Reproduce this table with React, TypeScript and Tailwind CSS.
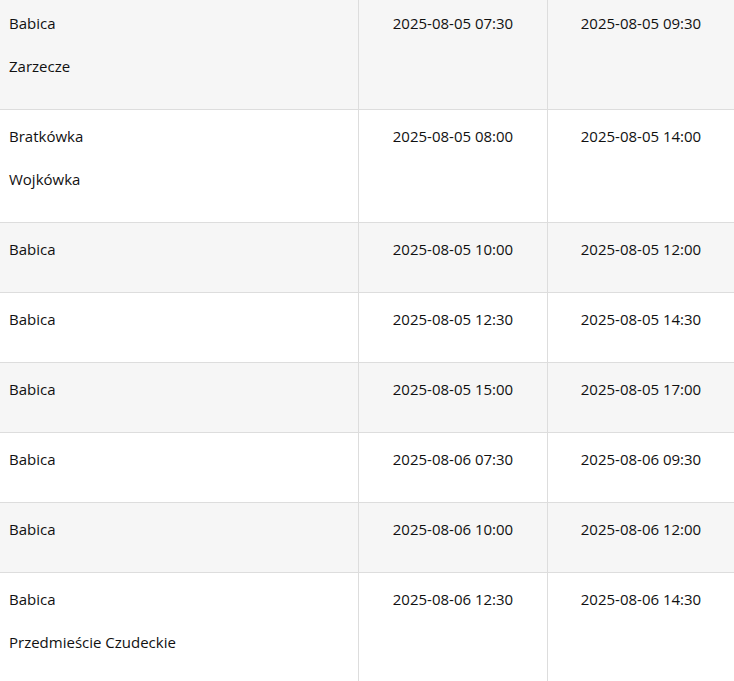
import React from 'react';

type Row = { places: string[]; start: string; end: string };

const rows: Row[] = [
    { places: ['Babica', 'Zarzecze'], start: '2025-08-05 07:30', end: '2025-08-05 09:30' },
    { places: ['Bratkówka', 'Wojkówka'], start: '2025-08-05 08:00', end: '2025-08-05 14:00' },
    { places: ['Babica'], start: '2025-08-05 10:00', end: '2025-08-05 12:00' },
    { places: ['Babica'], start: '2025-08-05 12:30', end: '2025-08-05 14:30' },
    { places: ['Babica'], start: '2025-08-05 15:00', end: '2025-08-05 17:00' },
    { places: ['Babica'], start: '2025-08-06 07:30', end: '2025-08-06 09:30' },
    { places: ['Babica'], start: '2025-08-06 10:00', end: '2025-08-06 12:00' },
    { places: ['Babica', 'Przedmieście Czudeckie'], start: '2025-08-06 12:30', end: '2025-08-06 14:30' },
];

export default function App() {
    return (
        <div className="w-[734px] h-[681px] overflow-hidden bg-white text-[15px] text-[#111111] font-['Open_Sans',sans-serif]">
            <div className="-mt-[3px] flex flex-col">
                {rows.map((row, i) => (
                    <div
                        key={i}
                        className={`grid grid-cols-[359px_189px_186px] border-b border-[#dddddd] ${i % 2 === 0 ? 'bg-[#f6f6f6]' : 'bg-white'}`}
                    >
                        <div className="pl-[9px] pt-[11px] pb-[15px] border-r border-[#dddddd]">
                            {row.places.map((p) => (
                                <p key={p} className="h-[30px] leading-[30px] mb-[13px]">{p}</p>
                            ))}
                        </div>
                        <div className="pt-[11px] text-center border-r border-[#dddddd]">
                            <p className="h-[30px] leading-[30px]">{row.start}</p>
                        </div>
                        <div className="pt-[11px] text-center">
                            <p className="h-[30px] leading-[30px]">{row.end}</p>
                        </div>
                    </div>
                ))}
            </div>
        </div>
    );
}
